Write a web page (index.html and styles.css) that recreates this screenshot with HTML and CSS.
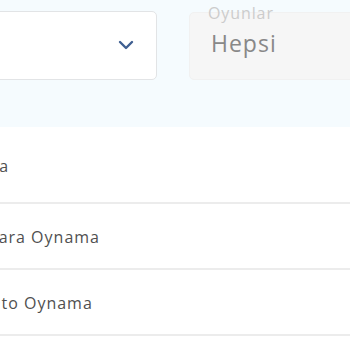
FILE: index.html
```html
<!DOCTYPE html>
<html lang="tr">
<head>
<meta charset="utf-8">
<link rel="stylesheet" href="styles.css">
</head>
<body>
<div class="page">
  <div class="filters">
    <div class="select">
      <span class="select-value">Tümü</span>
      <svg class="chevron" width="16" height="10" viewBox="0 0 16 10"><path d="M2 2 L8 8 L14 2" fill="none" stroke="#3f5f91" stroke-width="2.4" stroke-linecap="round" stroke-linejoin="round"/></svg>
    </div>
    <div class="field disabled">
      <span class="field-label">Oyunlar</span>
      <span class="field-value">Hepsi</span>
    </div>
  </div>
  <ul class="list">
    <li class="row row-first"><span class="row-text">Oyna</span></li>
    <li class="row"><span class="row-text">Para Oynama</span></li>
    <li class="row"><span class="row-text">Oto Oynama</span></li>
  </ul>
</div>
</body>
</html>
```
FILE: styles.css
```css
html, body {
  margin: 0;
  padding: 0;
  background: #ffffff;
  overflow: hidden;
}
.page {
  width: 350px;
  height: 350px;
  overflow: hidden;
  font-family: "Open Sans", "Liberation Sans", sans-serif;
}
.filters {
  height: 127px;
  box-sizing: border-box;
  padding-top: 11px;
  background: #f5fbfe;
  display: flex;
  gap: 32px;
  margin-left: -60px;
  width: 500px;
}
.select {
  width: 217px;
  height: 69px;
  box-sizing: border-box;
  background: #ffffff;
  border: 1px solid #e2e4e6;
  border-radius: 5px;
  display: flex;
  align-items: center;
  justify-content: space-between;
  padding: 0 22px 2px 16px;
}
.select-value {
  visibility: hidden;
}
.chevron {
  display: block;
}
.field {
  width: 220px;
  height: 68px;
  margin-top: 1px;
  box-sizing: border-box;
  background: #f6f6f6;
  border: 1px solid #f1f1f1;
  border-radius: 5px;
  display: flex;
  flex-direction: column;
  padding-left: 18px;
}
.field-label {
  font-size: 16px;
  letter-spacing: 0.9px;
  color: #cccccc;
  margin-top: -9px;
  line-height: 19px;
}
.field-value {
  font-size: 23px;
  letter-spacing: 1px;
  color: #888888;
  line-height: 30px;
  margin-top: 5px;
  padding-left: 3px;
}
.list {
  list-style: none;
  margin: 0;
  padding: 0;
}
.row {
  height: 66px;
  box-sizing: border-box;
  border-bottom: 2px solid #ececec;
  display: flex;
  align-items: center;
}
.row-first {
  height: 77px;
}
.row-text {
  font-size: 16px;
  letter-spacing: 1px;
  color: #505050;
  margin-left: -12px;
  padding-top: 2px;
}
.row-first .row-text {
  margin-left: -34px;
}
```
